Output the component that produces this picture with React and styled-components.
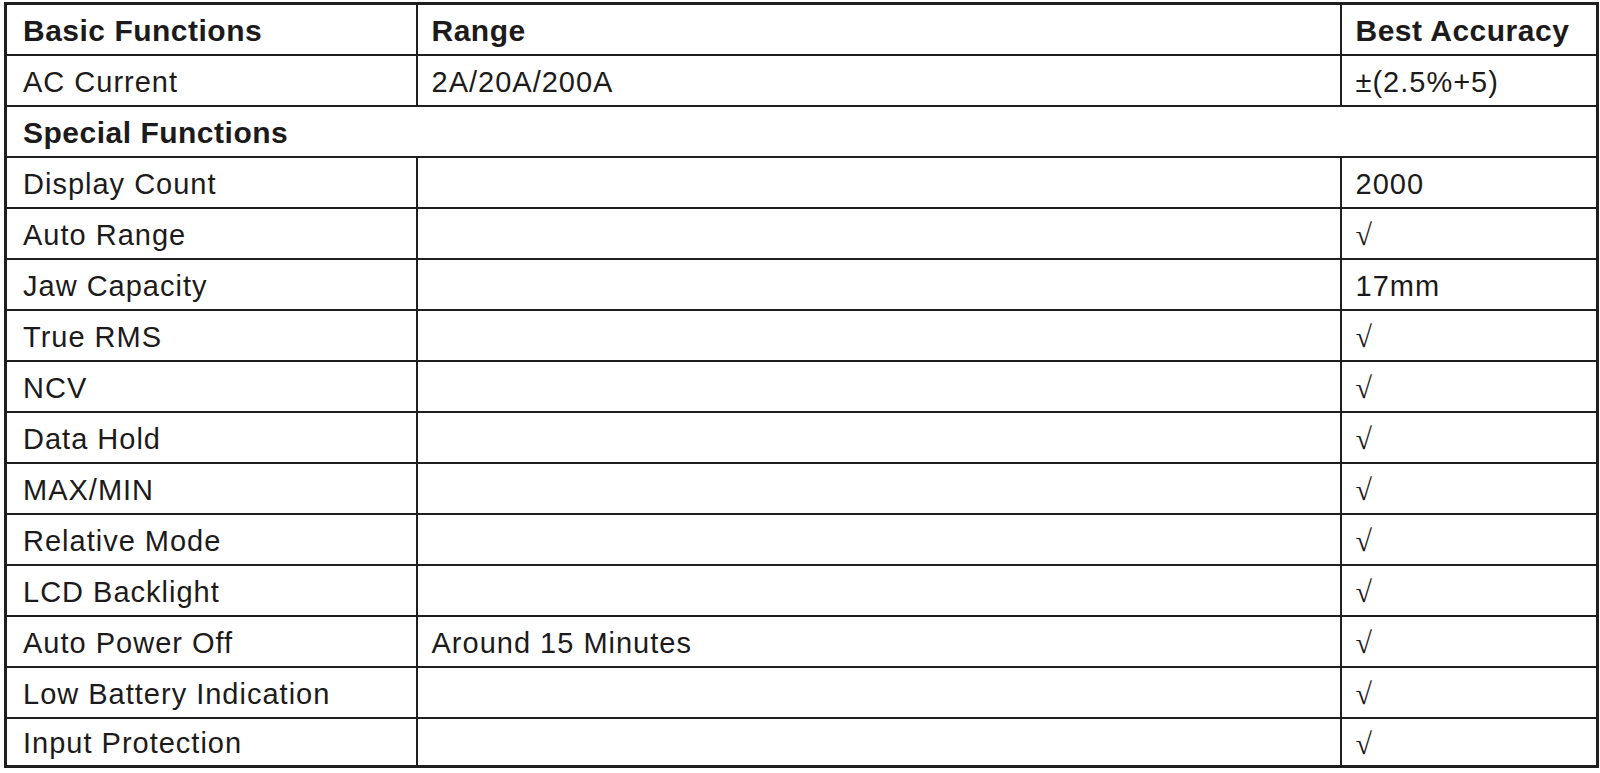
import React from "react";
import styled, { createGlobalStyle } from "styled-components";

const GlobalStyle = createGlobalStyle`
  html, body {
    margin: 0;
    padding: 0;
    background: #ffffff;
  }
`;

const Page = styled.div`
  padding: 2px 4px;
  background: #ffffff;
`;

const Table = styled.table`
  width: 1592px;
  border-collapse: collapse;
  table-layout: fixed;
  border: 3px solid #1f1f1f;
  font-family: "Liberation Sans", Arial, sans-serif;
  color: #1c1a1b;
`;

const Row = styled.tr`
  height: ${(p) => (p.$last ? "49px" : "51px")};
`;

const Cell = styled.td`
  border: 2.5px solid #1f1f1f;
  padding: 4px 0 0 14px;
  font-size: ${(p) => (p.$bold ? "30px" : "29px")};
  font-weight: ${(p) => (p.$bold ? 700 : 400)};
  letter-spacing: ${(p) => (p.$bold ? "0.5px" : "1px")};
  white-space: nowrap;
  vertical-align: middle;
  line-height: 1;

  &:first-child {
    padding-left: 16px;
  }
`;

const Check = styled.span`
  font-family: "Liberation Serif", "Times New Roman", serif;
  font-size: 30px;
  letter-spacing: 0;
`;

const rows = [
  ["Display Count", "", "2000"],
  ["Auto Range", "", "√"],
  ["Jaw Capacity", "", "17mm"],
  ["True RMS", "", "√"],
  ["NCV", "", "√"],
  ["Data Hold", "", "√"],
  ["MAX/MIN", "", "√"],
  ["Relative Mode", "", "√"],
  ["LCD Backlight", "", "√"],
  ["Auto Power Off", "Around 15 Minutes", "√"],
  ["Low Battery Indication", "", "√"],
  ["Input Protection", "", "√"],
];

export default function App() {
  return (
    <Page>
      <GlobalStyle />
      <Table>
        <colgroup>
          <col style={{ width: 411 }} />
          <col style={{ width: 924 }} />
          <col style={{ width: 257 }} />
        </colgroup>
        <tbody>
          <Row>
            <Cell $bold>Basic Functions</Cell>
            <Cell $bold>Range</Cell>
            <Cell $bold>Best Accuracy</Cell>
          </Row>
          <Row>
            <Cell>AC Current</Cell>
            <Cell>2A/20A/200A</Cell>
            <Cell>±(2.5%+5)</Cell>
          </Row>
          <Row>
            <Cell $bold colSpan={3}>
              Special Functions
            </Cell>
          </Row>
          {rows.map(([name, range, value], i) => (
            <Row key={name} $last={i === rows.length - 1}>
              <Cell>{name}</Cell>
              <Cell>{range}</Cell>
              <Cell>{value === "√" ? <Check>√</Check> : value}</Cell>
            </Row>
          ))}
        </tbody>
      </Table>
    </Page>
  );
}
